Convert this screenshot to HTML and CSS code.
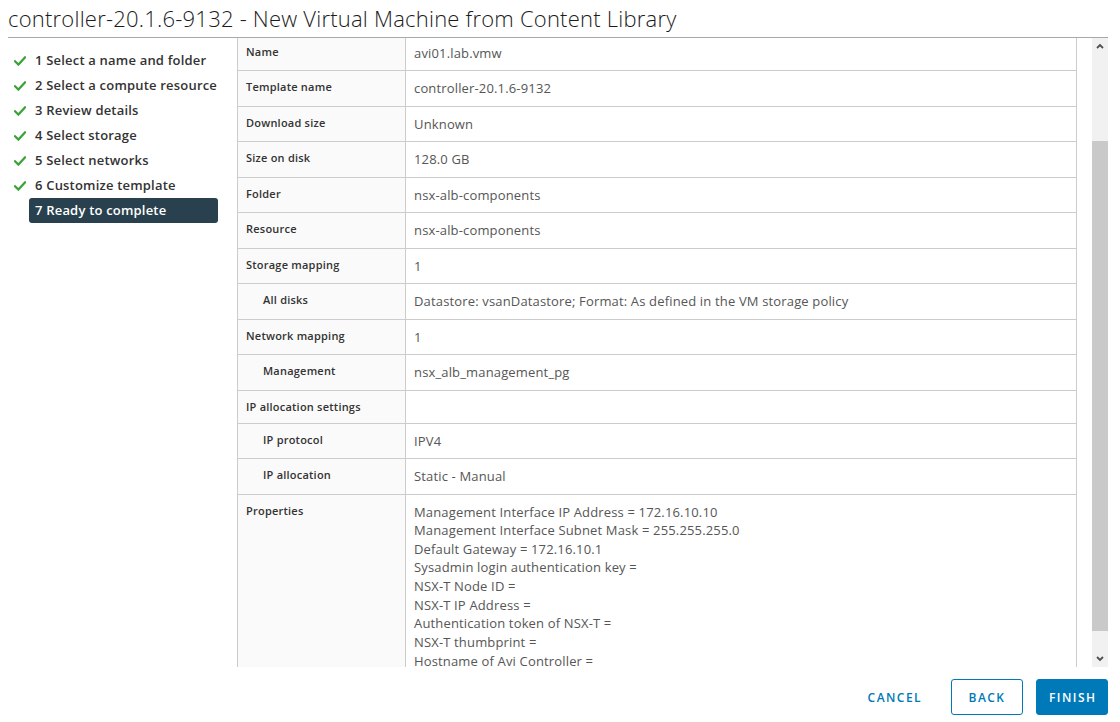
FILE: index.html
```html
<!DOCTYPE html>
<html lang="en">
<head>
<meta charset="utf-8">
<title>New Virtual Machine from Content Library</title>
<link rel="stylesheet" href="styles.css">
</head>
<body>
<div class="dialog">
  <h1 class="title">controller-20.1.6-9132 - New Virtual Machine from Content Library</h1>
  <div class="body">
    <nav class="steps">
      <div class="step"><svg class="check" viewBox="0 0 12 10"><path d="M1 5.2 L4.4 8.6 L11 1.4"/></svg><span class="step-label">1 Select a name and folder</span></div>
      <div class="step"><svg class="check" viewBox="0 0 12 10"><path d="M1 5.2 L4.4 8.6 L11 1.4"/></svg><span class="step-label">2 Select a compute resource</span></div>
      <div class="step"><svg class="check" viewBox="0 0 12 10"><path d="M1 5.2 L4.4 8.6 L11 1.4"/></svg><span class="step-label">3 Review details</span></div>
      <div class="step"><svg class="check" viewBox="0 0 12 10"><path d="M1 5.2 L4.4 8.6 L11 1.4"/></svg><span class="step-label">4 Select storage</span></div>
      <div class="step"><svg class="check" viewBox="0 0 12 10"><path d="M1 5.2 L4.4 8.6 L11 1.4"/></svg><span class="step-label">5 Select networks</span></div>
      <div class="step"><svg class="check" viewBox="0 0 12 10"><path d="M1 5.2 L4.4 8.6 L11 1.4"/></svg><span class="step-label">6 Customize template</span></div>
      <div class="step"><span class="check-space"></span><span class="step-label active">7 Ready to complete</span></div>
    </nav>
    <div class="content">
      <div class="viewport">
        <div class="stack">
          <div class="row"><div class="label">Name</div><div class="value">avi01.lab.vmw</div></div>
          <div class="row"><div class="label">Template name</div><div class="value">controller-20.1.6-9132</div></div>
          <div class="row"><div class="label">Download size</div><div class="value">Unknown</div></div>
          <div class="row"><div class="label">Size on disk</div><div class="value">128.0 GB</div></div>
          <div class="row"><div class="label">Folder</div><div class="value">nsx-alb-components</div></div>
          <div class="row"><div class="label">Resource</div><div class="value">nsx-alb-components</div></div>
          <div class="row"><div class="label">Storage mapping</div><div class="value">1</div></div>
          <div class="row"><div class="label sub">All disks</div><div class="value">Datastore: vsanDatastore; Format: As defined in the VM storage policy</div></div>
          <div class="row"><div class="label">Network mapping</div><div class="value">1</div></div>
          <div class="row"><div class="label sub">Management</div><div class="value">nsx_alb_management_pg</div></div>
          <div class="row"><div class="label">IP allocation settings</div><div class="value empty"></div></div>
          <div class="row"><div class="label sub">IP protocol</div><div class="value">IPV4</div></div>
          <div class="row"><div class="label sub">IP allocation</div><div class="value">Static - Manual</div></div>
          <div class="row"><div class="label">Properties</div><div class="value multi">Management Interface IP Address = 172.16.10.10<br>Management Interface Subnet Mask = 255.255.255.0<br>Default Gateway = 172.16.10.1<br>Sysadmin login authentication key =<br>NSX-T Node ID =<br>NSX-T IP Address =<br>Authentication token of NSX-T =<br>NSX-T thumbprint =<br>Hostname of Avi Controller =<br>&nbsp;</div></div>
        </div>
      </div>
      <div class="scrollbar">
        <div class="arrow"><svg viewBox="0 0 8 6"><path d="M1 5 L4 2 L7 5"/></svg></div>
        <div class="track">
          <div class="track-before"></div>
          <div class="thumb"></div>
          <div class="track-after"></div>
        </div>
        <div class="arrow"><svg viewBox="0 0 8 6"><path d="M1 1 L4 4 L7 1"/></svg></div>
      </div>
    </div>
  </div>
  <div class="footer">
    <button class="btn btn-link">Cancel</button>
    <button class="btn btn-outline">Back</button>
    <button class="btn btn-primary">Finish</button>
  </div>
</div>
</body>
</html>
```
FILE: styles.css
```css
* { box-sizing: border-box; }
html, body { margin: 0; padding: 0; background: #fff; }
body {
  font-family: "Open Sans", "Noto Sans", "Liberation Sans", sans-serif;
  color: #333;
  width: 1120px;
  height: 722px;
  overflow: hidden;
}
.dialog {
  padding: 0 12px 0 8px;
  display: flex;
  flex-direction: column;
  height: 722px;
}
.title {
  margin: 0;
  height: 38px;
  padding-top: 4px;
  font-size: 22px;
  line-height: 28px;
  font-weight: 300;
  color: #1b1b1b;
  letter-spacing: 0.01em;
  border-bottom: 1px solid #a8a8a8;
  white-space: nowrap;
}
.body {
  display: flex;
  height: 629px;
}
.steps {
  width: 229px;
  flex: none;
  padding: 10px 19px 0 6px;
  display: flex;
  flex-direction: column;
}
.step {
  display: flex;
  align-items: center;
  height: 25px;
}
.check {
  width: 12px;
  height: 10px;
  flex: none;
  margin-right: 3px;
}
.check path {
  fill: none;
  stroke: #3aa336;
  stroke-width: 2.2;
  stroke-linecap: square;
}
.check-space { width: 15px; flex: none; }
.step-label {
  flex: 1;
  height: 25px;
  line-height: 25px;
  padding-left: 6px;
  font-size: 13px;
  font-weight: 600;
  letter-spacing: 0.015em;
  color: #333;
  border-radius: 3px;
  white-space: nowrap;
}
.step-label.active {
  background: #29414e;
  color: #fff;
}
.content {
  flex: 1;
  display: flex;
  gap: 15px;
}
.viewport {
  width: 840px;
  height: 629px;
  overflow: hidden;
  border-left: 1px solid #ccc;
  border-right: 1px solid #ccc;
}
.stack {
  margin-top: -2.5px;
}
.row {
  display: grid;
  grid-template-columns: 167px 1fr;
  border-bottom: 1px solid #ccc;
}
.label {
  background: #fafafa;
  padding: 6px 8px;
  font-size: 11px;
  line-height: 20px;
  font-weight: 600;
  color: #333;
  letter-spacing: 0.02em;
}
.label.sub { padding-left: 25px; }
.value {
  border-left: 1px solid #ccc;
  padding: 8px 8px;
  font-size: 13px;
  line-height: 18.5px;
  letter-spacing: 0.012em;
  color: #565656;
}
.value.multi { line-height: 18.65px; }
.value.empty { padding: 0 8px; }
.scrollbar {
  width: 16px;
  flex: none;
  background: #f1f1f1;
  display: flex;
  flex-direction: column;
}
.arrow {
  height: 16px;
  display: flex;
  align-items: center;
  justify-content: center;
  flex: none;
}
.arrow svg { width: 8px; height: 6px; }
.arrow path {
  fill: none;
  stroke: #505050;
  stroke-width: 1.8;
}
.track {
  flex: 1;
  display: flex;
  flex-direction: column;
}
.track-before { height: 87px; flex: none; }
.thumb { height: 490px; background: #c9c9c9; flex: none; }
.track-after { flex: 1; }
.footer {
  flex: 1;
  display: flex;
  justify-content: flex-end;
  align-items: flex-start;
  padding-top: 12px;
}
.btn {
  height: 36px;
  min-width: 72px;
  padding: 0 12px;
  border-radius: 3px;
  font-family: inherit;
  font-size: 12px;
  font-weight: 600;
  letter-spacing: 0.12em;
  text-transform: uppercase;
  cursor: pointer;
}
.btn-link {
  border: 1px solid transparent;
  background: transparent;
  color: #0079b8;
  margin-right: 16px;
}
.btn-outline {
  border: 1px solid #0079b8;
  background: #fff;
  color: #0079b8;
  width: 71px;
  margin-right: 13px;
}
.btn-primary {
  border: 1px solid #0079b8;
  background: #0079b8;
  color: #fff;
  width: 72px;
}
```
